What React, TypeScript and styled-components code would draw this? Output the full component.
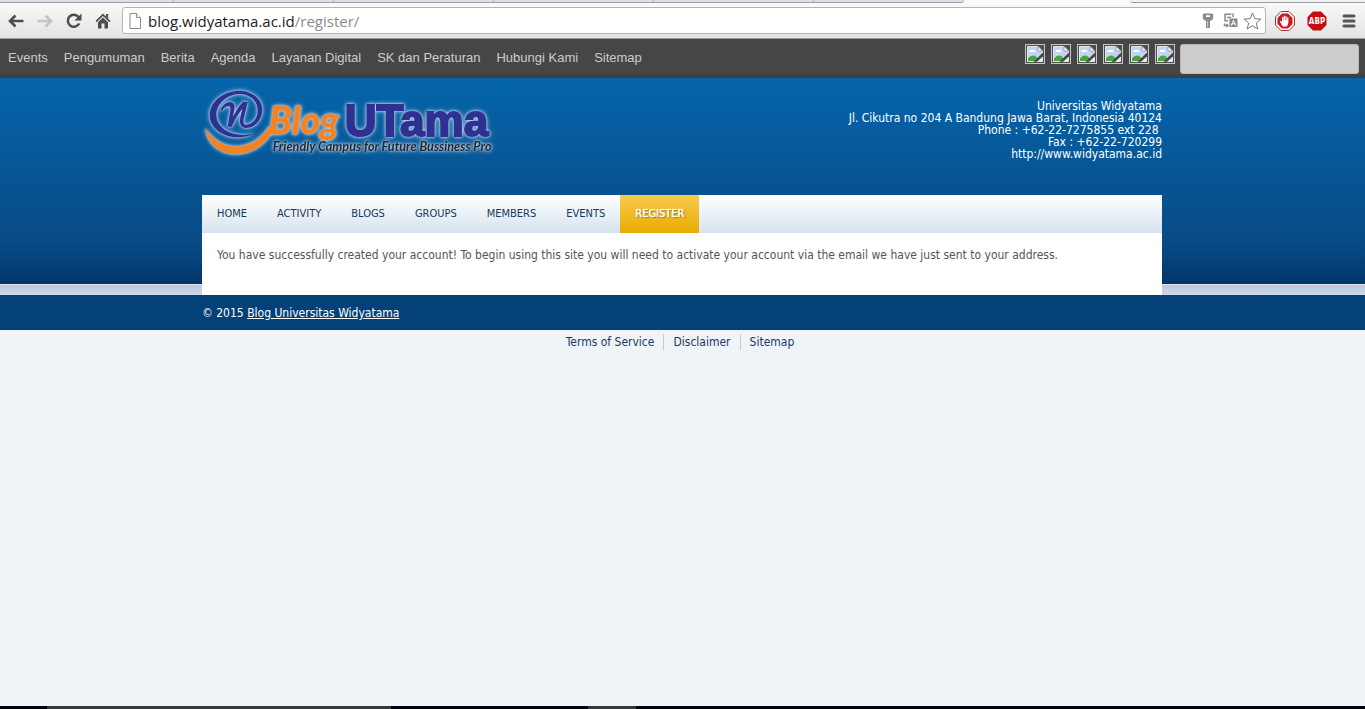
import React from "react";
import styled, { createGlobalStyle, css } from "styled-components";

const sans = `"DejaVu Sans Condensed", "DejaVu Sans", sans-serif`;

const GlobalStyle = createGlobalStyle`
  *, *::before, *::after { box-sizing: border-box; }
  body { margin: 0; background: #eef4f8; font-family: ${sans}; font-size: 12px; }
  ul { margin: 0; padding: 0; list-style: none; }
  a { color: inherit; text-decoration: none; }
  button { padding: 0; border: 0; background: none; cursor: pointer; }
  svg { display: block; }
`;

const Screen = styled.div`
  display: flex;
  flex-direction: column;
  min-height: 100vh;
`;

/* ---------- browser ---------- */

const TabStrip = styled.div`
  display: flex;
  height: 3px;
  background: #f9f9f9;
`;

const TabGroup = styled.div<{ $grow?: boolean }>`
  display: flex;
  flex: ${(p) => (p.$grow ? "1" : "0 0 auto")};
  margin-left: ${(p) => (p.$grow ? "166px" : "0")};
  padding-left: ${(p) => (p.$grow ? "0" : "14px")};
  background: ${(p) => (p.$grow ? "#f1f2f4" : "#dbdfe8")};
  border-bottom: 1px solid #9a9da3;
  border-radius: ${(p) => (p.$grow ? "0 0 0 3px" : "0 0 3px 0")};
`;

const TabEdge = styled.span`
  width: 160px;
  border-right: 1px solid #b3b7c0;
  &:last-child { width: 150px; }
`;

const Toolbar = styled.div`
  display: flex;
  align-items: center;
  height: 36px;
  padding-left: 1px;
  background: linear-gradient(#f9f9f9, #e3e3e3);
  border-bottom: 1px solid #9c9c9c;
`;

const ToolButton = styled.button<{ $wide?: boolean }>`
  display: grid;
  place-items: center;
  flex: none;
  width: ${(p) => (p.$wide ? "32px" : "29px")};
  height: 24px;
`;

const AddressBar = styled.div`
  display: flex;
  flex: 1;
  align-items: center;
  height: 27px;
  margin: 0 3px 0 5px;
  padding: 0 2px 0 6px;
  background: #fff;
  border: 1px solid #b4b4b4;
  border-radius: 3px;
`;

const Url = styled.div`
  flex: 1;
  margin-left: 6px;
  color: #8a8a8a;
  font: 15px/24px "Open Sans", sans-serif;
  outline: none;
  white-space: nowrap;
`;

const Host = styled.span`
  color: #1c1c1c;
`;

const BarButton = styled.button`
  display: grid;
  place-items: center;
  width: 22px;
  height: 24px;
`;

/* ---------- site top bar ---------- */

const AdminBar = styled.div`
  display: flex;
  justify-content: space-between;
  height: 39px;
  background: linear-gradient(#464646 34px, #3c3c3c);
  color: #cccccc;
  font-family: "Liberation Sans", sans-serif;
  font-size: 13px;
`;

const AdminLinks = styled.ul`
  display: flex;
  line-height: 37px;
  a { display: block; padding: 0 8px; }
`;

const AdminTools = styled.div`
  display: flex;
  align-items: flex-start;
  gap: 5px;
  padding: 5px 6px 0 0;
`;

const Social = styled.div`
  display: flex;
  gap: 6px;
`;

const Search = styled.input`
  width: 179px;
  height: 30px;
  padding: 0 8px;
  background: #cccccc;
  border: 1px solid #b8b8b8;
  border-radius: 3px;
`;

/* ---------- page ---------- */

const Stage = styled.div`
  background:
    linear-gradient(#0565ab 0, #07528f 117px, #084c87 160px, #064780 174px, #01356b 206px, #dde7f2 206px, #dde7f2 207px, #bfc6d6 207px, #cbdaec 217px) top / 100% 217px no-repeat;
`;

const Wrap = styled.div`
  width: 100%;
  max-width: 961px;
  margin: 0 auto;
  padding-right: 1px;
`;

const Header = styled.header`
  display: flex;
  justify-content: space-between;
  min-height: 117px;
  padding-top: 2px;
`;

const Contact = styled.address`
  padding-top: 20px;
  color: #fff;
  font-style: normal;
  line-height: 12px;
  text-align: right;
  white-space: pre;
`;

const Nav = styled.nav`
  background: linear-gradient(#ffffff, #d6e3ee);
  ul { display: flex; }
`;

const NavLink = styled.a<{ $active?: boolean }>`
  display: block;
  padding: 0 15px;
  color: #123a5e;
  font-size: 11px;
  line-height: 38px;
  ${(p) =>
    p.$active &&
    css`
      background: linear-gradient(#f6ca4c, #e8ab00);
      color: #fff;
      text-shadow: 0 0 1px #fff, 1px 1px 1px #8a6a18;
    `}
`;

const Content = styled.main`
  min-height: 62px;
  padding: 12px 15px 30px;
  background: #fff;
  color: #555;
  line-height: 20px;
  p { margin: 0; }
`;

const Footer = styled.footer`
  padding-top: 2px;
  background: #044178;
  color: #fff;
  line-height: 33px;
  a { text-decoration: underline; }
`;

const Legal = styled.ul`
  display: flex;
  justify-content: center;
  padding: 4px 5px 0 0;
  color: #1f3a63;
  line-height: 16px;
  li { padding: 0 9px; }
  li + li { border-left: 1px solid #c3cbd2; }
`;

const TaskBar = styled.div`
  display: flex;
  height: 3px;
  margin-top: auto;
  padding-left: 47px;
  background: #00040c;
`;

const Task = styled.span<{ $w: number }>`
  width: ${(p) => p.$w}px;
  margin-right: 197px;
  background: #35373b;
`;

/* ---------- drawings ---------- */

const Arrow = ({ color, flip }: { color: string; flip?: boolean }) => (
  <svg width="16" height="14" viewBox="0 0 16 14" fill="none" stroke={color} strokeWidth="2.6">
    {flip ? <path d="M0.5 7H14M8.500 1.500L14 7L8.500 12.500" /> : <path d="M15.500 7H2M7.500 1.500L2 7L7.500 12.500" />}
  </svg>
);

const Reload = () => (
  <svg width="16" height="16" viewBox="0 0 16 16">
    <path d="M13.200 10.500A6 6 0 1 1 12.500 4" fill="none" stroke="#4d4d4d" strokeWidth="2.500" />
    <path d="M15.500 0.500V7.500H8.500Z" fill="#4d4d4d" />
  </svg>
);

const Home = () => (
  <svg width="16" height="16" viewBox="0 0 16 16" fill="#4d4d4d">
    <path d="M8 0.500L15.500 8L14.300 9.200L8 3L1.700 9.200L0.500 8Z" />
    <path d="M11 1H13.200V5.500L11 3.500Z" />
    <path d="M8 4.500L13 9.300V15.500H9.500V10.500H6.500V15.500H3V9.300Z" />
  </svg>
);

const PageIcon = () => (
  <svg width="13" height="16" viewBox="0 0 13 16" fill="#fff" stroke="#8b8b8b">
    <path d="M1 0.500H7.500L11.500 4.500V15.500H1Z" />
    <path d="M7.500 0.500V4.500H11.500" />
  </svg>
);

const KeyIcon = () => (
  <svg width="12" height="16" viewBox="0 0 12 16" fill="#8a8a8a">
    <path fillRule="evenodd" d="M2 0.500H10Q11.200 0.500 11.200 2V5.500L9.500 7.500H8V15H4V7.500H2.500L0.800 5.500V2Q0.800 0.500 2 0.500ZM4 2.300V4H8V2.300Z" />
    <path d="M5.600 8V14" stroke="#c9c9c9" />
  </svg>
);

const TranslateIcon = () => (
  <svg width="15" height="15" viewBox="0 0 15 15" fill="none" stroke="#8a8a8a" strokeWidth="1.500">
    <path d="M8.500 1.200H2V7.800H5M4 4.500H8M10 0.500V4" />
    <path d="M1.500 10.500V12.500H4.500M3.500 11L5 12.500L3.500 14" />
    <rect x="6.500" y="5.500" width="8" height="8.500" fill="#8a8a8a" stroke="none" />
    <path d="M8.300 12.500L10.500 7.200L12.700 12.500M9 10.800H12" stroke="#fff" strokeWidth="1" />
  </svg>
);

const StarIcon = () => (
  <svg width="19" height="18" viewBox="0 0 19 18">
    <path d="M9.500 1L11.900 6.700L18 7.100L13.300 11L14.800 17L9.500 13.700L4.200 17L5.700 11L1 7.100L7.100 6.700Z" fill="#fff" stroke="#777" strokeLinejoin="round" />
  </svg>
);

const octagon = "M6 0.500H14L19.500 6V14L14 19.500H6L0.500 14V6Z";

const HandIcon = () => (
  <svg width="20" height="20" viewBox="0 0 20 20">
    <path d={octagon} fill="#fff" stroke="#a4342f" />
    <path d="M7 2.500H13L17.500 7V13L13 17.500H7L2.500 13V7Z" fill="#d4151a" />
    <path d="M7 14.500L4.800 10.300L6 9.700L7 11V6H8.300V9.300H8.700V4.800H10V9.300H10.400V5.200H11.700V9.500H12.100V6.500H13.400V12L12 15.500H8Z" fill="#fff" />
  </svg>
);

const AbpIcon = () => (
  <svg width="20" height="20" viewBox="0 0 20 20">
    <path d={octagon} fill="#c70d12" />
    <text x="10" y="13" textAnchor="middle" fill="#fff" fontFamily="DejaVu Sans Condensed, sans-serif" fontSize="8" fontWeight="700">ABP</text>
  </svg>
);

const MenuIcon = () => (
  <svg width="14" height="14" viewBox="0 0 14 14" stroke="#555" strokeWidth="3" strokeLinecap="round">
    <path d="M2 2H12M2 7H12M2 12H12" />
  </svg>
);

const BrokenImage = () => (
  <svg width="20" height="20" viewBox="0 0 20 20">
    <rect x="0.500" y="0.500" width="19" height="19" fill="#4d4d4d" stroke="#c6c6c6" />
    <path d="M2.500 2.500H13L17.500 7V17.500H2.500Z" fill="#c3d3f5" stroke="#e8e8e8" />
    <path d="M4 8Q5 5 7.500 6Q10 5 10.500 8Z" fill="#fff" />
    <path d="M3 17V14.500Q7 9.500 11.500 13L14 17Z" fill="#4aa53a" />
    <path d="M18 8.500L8.500 17.800H12L18 12.500Z" fill="#46464a" />
    <path d="M13 2.500V7H17.500Z" fill="#fff" stroke="#777" strokeWidth="0.600" />
    <path d="M12.500 17.500H17.500V13Z" fill="#e3ebe3" />
  </svg>
);

const GlowSvg = styled.svg`
  overflow: visible;
  filter: drop-shadow(0 0 1px #c8daea) drop-shadow(0 0 2px #9cc0de);
`;

const Logo = () => (
  <GlowSvg width="300" height="85" viewBox="21 0 900 255" role="img" aria-label="Blog UTama">
    <path d="M30 144Q66 200 124 200Q184 198 222 142L240 128L234 150Q198 220 118 222Q44 216 30 144Z" fill="#f58220" />
    <path
      fill="#2e3192"
      d="M180 160C120 190 44 160 44 104C46 58 94 30 138 32C182 36 204 64 202 94C198 124 178 144 154 144C138 144 132 132 136 112L142 86C132 98 120 116 110 140L98 140L106 92Q108 76 98 78Q88 80 80 92L76 88Q90 66 106 66Q122 68 118 88L114 110Q130 80 144 66L158 66L146 116Q142 134 154 134C174 132 188 114 188 92C188 62 166 42 132 42C96 44 64 70 64 106C66 150 120 176 180 160Z"
    />
    <text x="222" y="163" fill="#f58220" stroke="#f58220" strokeWidth="1" fontFamily="Lato, sans-serif" fontSize="111" fontStyle="italic" fontWeight="900">Blog</text>
    <text x="449" y="168" fill="#2e3192" stroke="#2e3192" strokeWidth="6" fontFamily="Liberation Sans, sans-serif" fontSize="132" fontWeight="700">UTama</text>
    <text x="233" y="213" fill="#1e2630" fontFamily="Lato, sans-serif" fontSize="38" fontStyle="italic" fontWeight="700">Friendly Campus for Future Bussiness Pro</text>
  </GlowSvg>
);

const adminLinks = ["Events", "Pengumuman", "Berita", "Agenda", "Layanan Digital", "SK dan Peraturan", "Hubungi Kami", "Sitemap"];
const navLinks = ["HOME", "ACTIVITY", "BLOGS", "GROUPS", "MEMBERS", "EVENTS", "REGISTER"];
const tabs = [1, 2, 3, 4, 5, 6];
const socialLinks = [1, 2, 3, 4, 5, 6];

export default function App() {
  return (
    <Screen>
      <GlobalStyle />
      <TabStrip>
        <TabGroup>
          {tabs.map((n) => <TabEdge key={n} />)}
        </TabGroup>
        <TabGroup $grow />
      </TabStrip>
      <Toolbar>
        <ToolButton aria-label="Back"><Arrow color="#4d4d4d" /></ToolButton>
        <ToolButton aria-label="Forward" disabled><Arrow color="#c4c4c4" flip /></ToolButton>
        <ToolButton aria-label="Reload"><Reload /></ToolButton>
        <ToolButton aria-label="Home"><Home /></ToolButton>
        <AddressBar>
          <PageIcon />
          <Url role="textbox" aria-label="Address" contentEditable suppressContentEditableWarning spellCheck={false}>
            <Host>blog.widyatama.ac.id</Host>/register/
          </Url>
          <BarButton aria-label="Saved password"><KeyIcon /></BarButton>
          <BarButton aria-label="Translate"><TranslateIcon /></BarButton>
          <BarButton aria-label="Bookmark"><StarIcon /></BarButton>
        </AddressBar>
        <ToolButton $wide aria-label="AdBlock"><HandIcon /></ToolButton>
        <ToolButton $wide aria-label="Adblock Plus"><AbpIcon /></ToolButton>
        <ToolButton $wide aria-label="Menu"><MenuIcon /></ToolButton>
      </Toolbar>

      <AdminBar>
        <AdminLinks>
          {adminLinks.map((label) => <li key={label}><a href="#">{label}</a></li>)}
        </AdminLinks>
        <AdminTools>
          <Social>
            {socialLinks.map((n) => <a key={n} href="#" aria-label={`Social link ${n}`}><BrokenImage /></a>)}
          </Social>
          <Search type="search" aria-label="Search" />
        </AdminTools>
      </AdminBar>

      <Stage>
        <Wrap>
          <Header>
            <a href="#"><Logo /></a>
            <Contact>
              Universitas Widyatama<br />
              Jl. Cikutra no 204 A Bandung Jawa Barat, Indonesia 40124<br />
              {"Phone : +62-22-7275855 ext 228\u00a0"}<br />
              Fax : +62-22-720299<br />
              http://www.widyatama.ac.id
            </Contact>
          </Header>
          <Nav>
            <ul>
              {navLinks.map((label) => (
                <li key={label}><NavLink href="#" $active={label === "REGISTER"}>{label}</NavLink></li>
              ))}
            </ul>
          </Nav>
          <Content>
            <p>You have successfully created your account! To begin using this site you will need to activate your account via the email we have just sent to your address.</p>
          </Content>
        </Wrap>
      </Stage>
      <Footer>
        <Wrap>© 2015 <a href="#">Blog Universitas Widyatama</a></Wrap>
      </Footer>
      <Legal>
        <li><a href="#">Terms of Service</a></li>
        <li><a href="#">Disclaimer</a></li>
        <li><a href="#">Sitemap</a></li>
      </Legal>
      <TaskBar>
        <Task $w={344} />
        <Task $w={48} />
      </TaskBar>
    </Screen>
  );
}
